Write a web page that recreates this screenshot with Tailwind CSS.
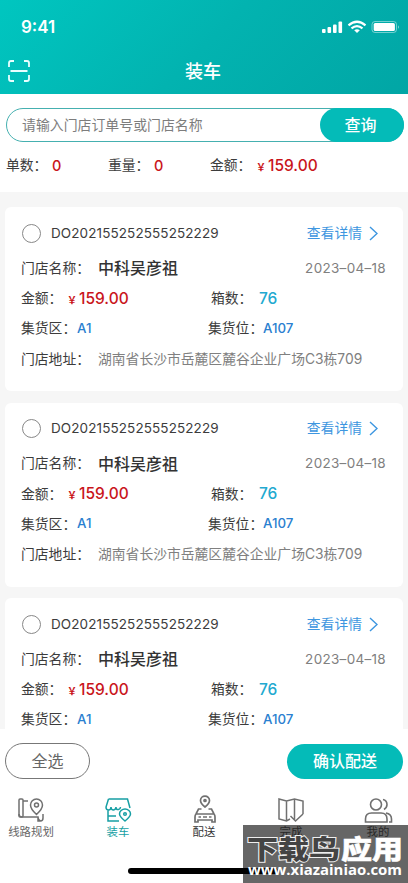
<!DOCTYPE html>
<html lang="zh-CN">
<head>
<meta charset="utf-8">
<title>装车</title>
<script src="https://cdn.jsdelivr.net/npm/@tailwindcss/browser@4"></script>
</head>
<body class="w-[408px] h-[883px] overflow-hidden bg-[#f6f6f6] font-[Inter,'Noto_Sans_CJK_SC',sans-serif] text-[13.8px] text-[#3c3c3c]">
<div class="relative flex h-[883px] w-[408px] flex-col overflow-hidden">
  <header class="h-[94px] shrink-0 bg-linear-135 from-[#00c6c0] via-[#02b3b0] to-[#01a6a5] text-white">
    <div class="flex h-[54px] items-center justify-between pl-[21px] pr-[8px]">
      <span class="text-[17px] font-semibold leading-none">9:41</span>
      <svg class="h-[14px] w-[78px]" viewBox="0 0 78 14" fill="none">
        <g fill="#fff"><rect x="0" y="9" width="3.6" height="4" rx="1"/><rect x="5.5" y="7" width="3.6" height="6" rx="1"/><rect x="11" y="4.500" width="3.6" height="8.500" rx="1"/><rect x="16.500" y="1.500" width="3.6" height="11.500" rx="1"/></g>
        <g stroke="#fff" stroke-width="2.200"><path d="M26.500 5.300Q35 -1.800 43.500 5.300"/><path d="M29.500 8.300Q35 3.800 40.500 8.300"/></g><path d="M32.200 10.300Q35 8.300 37.800 10.300L35 13Z" fill="#fff"/>
        <rect x="50" y="1.500" width="24.500" height="11" rx="3" stroke="#fff" stroke-opacity=".45"/><rect x="51.700" y="3" width="21.200" height="8" rx="1.500" fill="#fff"/><path d="M76 5.200Q78 7 76 8.800Z" fill="#fff" fill-opacity=".5"/>
      </svg>
    </div>
    <div class="grid h-[34px] grid-cols-[1fr_auto_1fr] items-center pl-[8px] pr-[10px]">
      <svg class="h-[22px] w-[22px]" viewBox="0 0 22 22" fill="none" stroke="#e8ffff" stroke-width="1.800"><path d="M1 7V3Q1 1 3 1H6M16 1H19Q21 1 21 3V7M21 15V19Q21 21 19 21H16M6 21H3Q1 21 1 19V15M2.500 11H19.500"/></svg>
      <h1 class="pt-[2px] text-[18px] font-medium leading-none">装车</h1>
    </div>
  </header>

  <section class="h-[98px] shrink-0 bg-white pt-[14px]">
    <div class="ml-[6px] mr-[4px] flex h-[34px] items-stretch rounded-full border border-[#45b0b0] pl-[15px]">
      <span class="flex flex-1 items-center text-[13.9px] text-[#7d7d7d]">请输入门店订单号或门店名称</span>
      <button class="-my-px -mr-px w-[84px] rounded-full bg-[#04bbb8] pr-[3px] text-[16px] font-medium text-white">查询</button>
    </div>
    <div class="grid h-[47px] grid-cols-[102px_102px_1fr] items-center pl-[6px] whitespace-nowrap">
      <div class="flex items-center"><span class="w-[46px]">单数：</span><b class="text-[14.5px] font-medium text-[#c9151b]">0</b></div>
      <div class="flex items-center"><span class="w-[46px]">重量：</span><b class="text-[14.5px] font-medium text-[#c9151b]">0</b></div>
      <div class="flex items-center"><span class="w-[46px]">金额：</span><b class="flex items-baseline font-medium text-[#c9151b]"><span class="mr-[2px] text-[10px] font-bold">￥</span><span class="text-[15.5px]">159.00</span></b></div>
    </div>
  </section>

  <main id="list" class="flex min-h-0 flex-1 flex-col gap-[11.5px] overflow-hidden px-[5px] pt-[15px]"></main>

  <footer class="h-[154px] shrink-0 bg-white">
    <div class="flex items-center justify-between pt-[14px] pr-[5px] pl-[5px]">
      <button class="h-[36px] w-[85px] rounded-full border border-[#777] text-[16px] text-[#666]">全选</button>
      <button class="h-[35px] w-[116px] rounded-full bg-[#04bbb8] text-[16px] font-medium text-white">确认配送</button>
    </div>
    <nav class="grid grid-cols-[62px_112px_60px_114px_60px] pt-[15px] text-center text-[11.4px] leading-[16px] text-[#666]">
      <div class="flex flex-col items-center"><svg class="h-[30px] w-[30px]" viewBox="0 0 30 30" fill="none" stroke="#707070" stroke-width="1.500"><rect x="3" y="5" width="4" height="18" rx="1"/><path d="M3 20Q3 23 6 23H22Q22 26 24.500 27Q27 27 27 24V20M7 7H12M22 23V27H25M20.500 20.500Q14.500 15 14.500 11A6 6 0 0 1 26.500 11Q26.500 15 20.500 20.500Z"/><circle cx="20.500" cy="11" r="2"/></svg><span>线路规划</span></div>
      <div class="flex flex-col items-center text-[#179fa4]"><svg class="h-[30px] w-[30px]" viewBox="0 0 30 30" fill="none" stroke="currentColor" stroke-width="1.500"><path d="M5.500 5H24.500L27 14M5.500 5L3 13Q3 16 5.500 16Q8 16 8 13Q8 16 10.500 16Q13 15.500 13 13Q13 16 15.500 15.500Q17.500 15 17.500 13M5 16V27H16M5 22H13M22 27Q16.500 22.500 16.500 20A5.500 5 0 0 1 27.500 20Q27.500 22.500 22 27Z"/><circle cx="22" cy="20" r="1.300"/></svg><span>装车</span></div>
      <div class="flex flex-col items-center text-[#333]"><svg class="h-[30px] w-[30px]" viewBox="0 0 30 30" fill="none" stroke="#707070" stroke-width="1.700"><path d="M16 13Q11.500 9.500 11.500 6.500A4.500 4.300 0 0 1 20.500 6.500Q20.500 9.500 16 13ZM12.500 15H9.500L7 20Q6 21 6 23V28H9V26H23V28H26V23Q26 21 25 20L22.500 15H19.500M7 20H25"/><circle cx="16" cy="6.500" r="1"/><path d="M9.500 23H12M14 23H18M20 23H22.500"/></svg><span>配送</span></div>
      <div class="flex flex-col items-center"><svg class="h-[30px] w-[30px]" viewBox="0 0 30 30" fill="none" stroke="#707070" stroke-width="1.500"><path d="M14 25L10.500 27L3 25V5L10.500 7L18.500 5L27 7V20M10.500 7V27M18.500 5V26M14.500 22L19.500 27L27 20"/></svg><span>完成</span></div>
      <div class="flex flex-col items-center"><svg class="h-[30px] w-[30px]" viewBox="0 0 30 30" fill="none" stroke="#707070" stroke-width="1.600"><circle cx="13" cy="10.500" r="5.500"/><path d="M2.500 28V25Q2.500 19 8.500 19H18Q24 19 24 25V28ZM20 5.500Q24 6.500 24 10.500Q24 13.500 21 15.500M23 19Q28.500 20 28.500 25V28H26"/></svg><span>我的</span></div>
    </nav>
  </footer>
  <div class="absolute top-[868px] left-[128px] h-[6px] w-[150px] rounded-full bg-black"></div>
  <div class="absolute top-[825px] left-[243px] h-[58px] w-[165px] bg-black/60 text-white">
    <svg class="h-[58px] w-[165px]" viewBox="0 0 165 58"><g font-family="Noto Sans CJK SC, sans-serif" font-size="26.500" font-weight="900" stroke-width="2" paint-order="stroke"><text x="4" y="34" textLength="93" lengthAdjust="spacingAndGlyphs" fill="#444" stroke="#eee">下载鸟</text><text x="98" y="34" textLength="62" lengthAdjust="spacingAndGlyphs" fill="#fff" stroke="#fff" stroke-width=".5">应用</text></g><text x="5" y="50" textLength="154" lengthAdjust="spacingAndGlyphs" font-family="Open Sans" font-size="14.500" font-weight="700" fill="#fff">www.xiazainiao.com</text></svg>
  </div>
</div>
<template id="card">
  <article class="h-[184px] shrink-0 rounded-[6px] bg-white pt-[8.5px] pr-[17px] pl-[16px] whitespace-nowrap">
    <div class="flex h-[35px] items-center">
      <span class="ml-[1px] h-[19px] w-[19px] rounded-full border border-[#888]"></span>
      <span class="ml-[10px] text-[13.5px] tracking-[0.1px]">DO202155252555252229</span>
      <a class="ml-auto flex items-center gap-[7px] text-[#3d96e0]">查看详情<svg class="mr-[8px] h-[15px] w-[9px]" viewBox="0 0 9 15" fill="none" stroke="currentColor" stroke-width="1.400"><path d="M1 1L8 7.500L1 14"/></svg></a>
    </div>
    <div class="flex h-[35px] items-center"><span class="w-[77px]">门店名称：</span><strong class="text-[16px] font-medium text-[#333]">中科吴彦祖</strong><time class="ml-auto text-[13.5px] tracking-[0.3px] text-[#808080]">2023–04–18</time></div>
    <div class="flex h-[26px] items-center"><span class="w-[46px]">金额：</span><b class="flex items-baseline font-medium text-[#c9151b]"><span class="mr-[2px] text-[10px] font-bold">￥</span><span class="text-[15.5px]">159.00</span></b><span class="ml-auto w-[48px]">箱数：</span><b class="w-[127px] text-[15.5px] font-medium text-[#22a9d0]">76</b></div>
    <div class="flex h-[34px] items-center"><span class="w-[56px]">集货区：</span><b class="font-medium text-[13.3px] text-[#2a80d0]">A1</b><span class="ml-auto w-[55px]">集货位：</span><b class="w-[123px] font-medium text-[13.3px] text-[#2a80d0]">A107</b></div>
    <div class="flex h-[27px] items-center"><span class="w-[77px]">门店地址：</span><span class="text-[#808080]">湖南省长沙市岳麓区麓谷企业广场C3栋709</span></div>
  </article>
</template>
<script>
const list = document.getElementById('list');
for (let i = 0; i < 3; i++) list.append(document.getElementById('card').content.cloneNode(true));
</script>
</body>
</html>
